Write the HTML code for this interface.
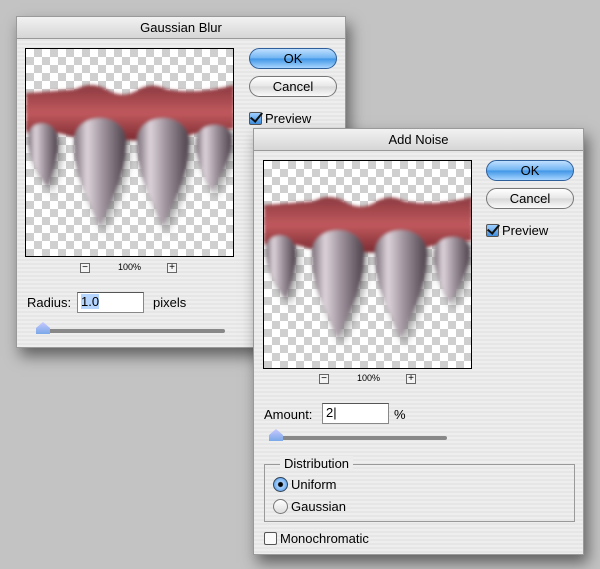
<!DOCTYPE html>
<html><head><style>
*{margin:0;padding:0;box-sizing:border-box}
body{width:600px;height:569px;background:#c3c3c3;font-family:"Liberation Sans",sans-serif;position:relative;overflow:hidden;color:#000}
.dlg{position:absolute;background:repeating-linear-gradient(#eeeeee 0 2px,#e6e6e6 2px 4px);box-shadow:4px 8px 14px rgba(0,0,0,.5);border:1px solid #9a9a9a}
.title{height:22px;background:linear-gradient(#f2f2f2,#d6d6d6);border-bottom:1px solid #999;text-align:center;font-size:13px;line-height:22px}
.prev{position:absolute;border:1px solid #000;background-color:#fff;background-image:linear-gradient(45deg,#cfcfcf 25%,transparent 25%,transparent 75%,#cfcfcf 75%),linear-gradient(45deg,#cfcfcf 25%,transparent 25%,transparent 75%,#cfcfcf 75%);background-size:16px 16px;background-position:0 0,8px 8px;overflow:hidden}
.btn{position:absolute;width:88px;height:21px;border-radius:11px;text-align:center;font-size:13px;line-height:19px;border:1px solid #777}
.ok{background:linear-gradient(#bfe0ff,#6fb3f2 50%,#3f95e6 51%,#a9d6ff);border-color:#2f5f9a}
.cn{background:linear-gradient(#fff,#e6e6e6 50%,#d8d8d8 51%,#fafafa)}
.chk{position:absolute;font-size:13px}
.cb{display:inline-block;width:13px;height:13px;vertical-align:-2px;margin-right:3px;border:1px solid #555;border-radius:2px}
.cb.on{background:linear-gradient(#9fd0ff,#3f8ee0);position:relative}
.cb.on:after{content:"";position:absolute;left:3px;top:-3px;width:5px;height:10px;border:solid #111;border-width:0 2px 2px 0;transform:rotate(40deg)}
.small{position:absolute;font-size:9px}
.sq{position:absolute;width:10px;height:10px;border:1px solid #666;background:#f4f4f4;font-size:10px;line-height:8px;text-align:center}
.lbl{position:absolute;font-size:13px}
.inp{position:absolute;background:#fff;border:1px solid #888;border-top-color:#555;font-size:13px;padding-left:3px;line-height:18px}
.track{position:absolute;height:4px;border-radius:2px;background:#888}
.thumb{position:absolute;width:14px;height:12px;background:linear-gradient(#c8c8ff,#7aa8e8);clip-path:polygon(50% 0,100% 50%,100% 100%,0 100%,0 50%);}
</style></head><body>
<svg width="0" height="0" style="position:absolute">
<defs>
<linearGradient id="gum" x1="0" y1="0" x2="0" y2="1"><stop offset="0" stop-color="#8c3a40"/><stop offset=".5" stop-color="#c0595e"/><stop offset="1" stop-color="#7a2a30"/></linearGradient>
<linearGradient id="fang" x1="0" y1="0" x2="1" y2="0"><stop offset="0" stop-color="#7a6e78"/><stop offset=".25" stop-color="#ddd3da"/><stop offset=".55" stop-color="#a0949e"/><stop offset="1" stop-color="#4e424c"/></linearGradient>
<filter id="bl"><feGaussianBlur stdDeviation="1.5"/></filter>
<filter id="sh"><feGaussianBlur stdDeviation="4"/></filter>
<g id="teeth">
<g filter="url(#sh)" fill="#555" opacity=".5" transform="translate(4,6)">
<path d="M48 95 C45 62 100 60 100 92 C100 130 80 160 74 178 C62 150 48 125 48 95Z"/>
<path d="M111 95 C108 62 163 60 163 92 C163 130 143 160 137 178 C125 150 111 125 111 95Z"/>
<path d="M2 90 C0 70 32 68 32 92 C32 110 26 125 22 138 C12 125 2 110 2 90Z"/>
<path d="M170 92 C170 72 206 70 206 90 C206 110 192 130 186 142 C176 125 170 110 170 92Z"/>
</g>
<g filter="url(#bl)">
<path d="M0 44 Q30 42 50 40 Q65 32 80 40 Q95 50 110 42 Q125 32 140 40 Q170 46 208 36 L208 80 Q180 80 150 90 Q120 94 90 90 Q60 92 40 86 Q20 80 0 84Z" fill="url(#gum)"/>
<path d="M2 90 C0 70 32 68 32 92 C32 110 26 125 22 138 C12 125 2 110 2 90Z" fill="url(#fang)"/>
<path d="M48 95 C45 62 100 60 100 92 C100 130 80 160 74 178 C62 150 48 125 48 95Z" fill="url(#fang)"/>
<path d="M111 95 C108 62 163 60 163 92 C163 130 143 160 137 178 C125 150 111 125 111 95Z" fill="url(#fang)"/>
<path d="M170 92 C170 72 206 70 206 90 C206 110 192 130 186 142 C176 125 170 110 170 92Z" fill="url(#fang)"/>
</g></g></defs></svg>

<div class="dlg" style="left:16px;top:16px;width:330px;height:332px">
<div class="title">Gaussian Blur</div>
<div class="prev" style="left:8px;top:31px;width:209px;height:209px"><svg width="208" height="208"><use href="#teeth"/></svg></div>
<div class="btn ok" style="left:232px;top:31px">OK</div>
<div class="btn cn" style="left:232px;top:59px">Cancel</div>
<div class="chk" style="left:232px;top:94px"><span class="cb on"></span>Preview</div>
<div class="sq" style="left:63px;top:246px">−</div>
<div class="small" style="left:101px;top:245px">100%</div>
<div class="sq" style="left:150px;top:246px">+</div>
<div class="lbl" style="left:10px;top:278px">Radius:</div>
<div class="inp" style="left:60px;top:275px;width:67px;height:21px"><span style="background:#b5d5ff">1.0</span></div>
<div class="lbl" style="left:136px;top:278px">pixels</div>
<div class="track" style="left:20px;top:312px;width:188px"></div>
<div class="thumb" style="left:19px;top:305px"></div>
</div>

<div class="dlg" style="left:253px;top:128px;width:331px;height:427px">
<div class="title">Add Noise</div>
<div class="prev" style="left:9px;top:31px;width:209px;height:209px"><svg width="208" height="208"><use href="#teeth"/></svg></div>
<div class="btn ok" style="left:232px;top:31px">OK</div>
<div class="btn cn" style="left:232px;top:59px">Cancel</div>
<div class="chk" style="left:232px;top:94px"><span class="cb on"></span>Preview</div>
<div class="sq" style="left:65px;top:245px">−</div>
<div class="small" style="left:103px;top:244px">100%</div>
<div class="sq" style="left:152px;top:245px">+</div>
<div class="lbl" style="left:10px;top:278px">Amount:</div>
<div class="inp" style="left:68px;top:274px;width:67px;height:21px">2|</div>
<div class="lbl" style="left:140px;top:278px">%</div>
<div class="track" style="left:18px;top:307px;width:175px"></div>
<div class="thumb" style="left:15px;top:300px"></div>
<div style="position:absolute;left:10px;top:335px;width:311px;height:58px;border:1px solid #999"></div>
<div class="lbl" style="left:26px;top:327px;background:#ececec;padding:0 4px">Distribution</div>
<div class="lbl" style="left:19px;top:348px"><span style="display:inline-block;width:15px;height:15px;border-radius:50%;background:radial-gradient(#000 2px,#a8d2ff 3px,#3c8ae0);border:1px solid #345;vertical-align:-3px;margin-right:3px"></span>Uniform</div>
<div class="lbl" style="left:19px;top:370px"><span style="display:inline-block;width:15px;height:15px;border-radius:50%;background:linear-gradient(#fff,#ddd);border:1px solid #777;vertical-align:-3px;margin-right:3px"></span>Gaussian</div>
<div class="lbl" style="left:10px;top:402px"><span class="cb" style="background:#fafafa"></span>Monochromatic</div>
</div>
</body></html>
